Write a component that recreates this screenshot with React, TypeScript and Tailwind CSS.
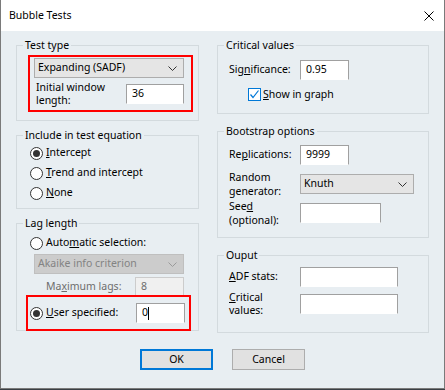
import type { ReactNode } from 'react'

const Chevron = ({ color = '#000' }: { color?: string }) => (
  <svg width="9" height="5" viewBox="0 0 9 5" className="shrink-0">
    <polyline points="0.5,0.5 4.5,4.5 8.5,0.5" fill="none" stroke={color} strokeWidth="1" />
  </svg>
)

const Radio = ({ checked }: { checked?: boolean }) => (
  <span className="w-[13px] h-[13px] rounded-full border border-[#333] bg-white flex items-center justify-center shrink-0">
    {checked && <span className="w-[7px] h-[7px] rounded-full bg-[#333]" />}
  </span>
)

const Field = ({
  value,
  width,
  disabled,
  caret
}: {
  value?: string
  width: string
  disabled?: boolean
  caret?: boolean
}) => (
  <div
    className={`${width} h-[20px] shrink-0 flex items-center pl-[5px] border ${
      disabled
        ? 'bg-[#f0f0f0] border-[#cccccc] text-[#6d6d6d]'
        : 'bg-white border-[#a0a0a0] border-b-white'
    }`}
  >
    {value}
    {caret && <span className="w-px h-[13px] bg-black" />}
  </div>
)

const Select = ({
  value,
  width,
  disabled
}: {
  value: string
  width: string
  disabled?: boolean
}) => (
  <div
    className={`${width} h-[20px] shrink-0 flex items-center justify-between pl-[3px] pr-[6px] border ${
      disabled
        ? 'bg-[#cccccc] border-[#bfbfbf] text-[#838383]'
        : 'bg-[#e5e5e5] border-[#adadad]'
    }`}
  >
    <span>{value}</span>
    <Chevron color={disabled ? '#9a9a9a' : '#333'} />
  </div>
)

const Group = ({
  title,
  height,
  children
}: {
  title: string
  height: string
  children: ReactNode
}) => (
  <fieldset className={`${height} border border-[#d3dade] flex flex-col`}>
    <legend className="ml-[6px] px-[2px] leading-[16px]">{title}</legend>
    {children}
  </fieldset>
)

const Button = ({ label, primary }: { label: string; primary?: boolean }) => (
  <div
    className={`w-[73px] h-[21px] flex items-center justify-center bg-[#e1e1e1] ${
      primary ? 'border-2 border-[#0078d7]' : 'border border-[#adadad]'
    }`}
  >
    {label}
  </div>
)

const App = () => {
  return (
    <div className="w-[445px] h-[390px] bg-[#3a3f44] font-['Noto_Sans',sans-serif] text-[10.5px] text-black">
      <div className="h-[389px] flex flex-col border-x border-b border-[#7a7a7a]">
        {/* Title bar */}
        <div className="h-[31px] shrink-0 bg-white flex items-center justify-between pl-[8px] pr-[10px]">
          <span>Bubble Tests</span>
          <svg width="10" height="10" viewBox="0 0 10 10">
            <path d="M0.5 0.5 L9.5 9.5 M9.5 0.5 L0.5 9.5" stroke="#000" strokeWidth="1" />
          </svg>
        </div>

        {/* Body */}
        <div className="flex-1 bg-[#e8eef2] px-[15px] pt-[6px] flex flex-col">
          <div className="flex gap-[18px]">
            {/* Left column */}
            <div className="w-[183px] flex flex-col gap-[6px]">
              <Group title="Test type" height="h-[84px]">
                <div className="ml-[11px] mt-[2px] w-[165px] h-[57px] border-2 border-[#ff0000] pl-[4px] pr-[7px] pt-[1px] flex flex-col">
                  <Select value="Expanding (SADF)" width="w-[150px]" />
                  <div className="mt-[6px] flex items-center h-[20px] w-[150px]">
                    <div className="ml-[2px] leading-[13px] flex-1">
                      Initial window
                      <br />
                      length:
                    </div>
                    <Field value="36" width="w-[58px]" />
                  </div>
                </div>
              </Group>

              <Group title="Include in test equation" height="h-[82px]">
                <div className="ml-[13px] flex flex-col">
                  <div className="h-[20px] flex items-center gap-[3px]">
                    <Radio checked />
                    <span><u>I</u>ntercept</span>
                  </div>
                  <div className="h-[20px] flex items-center gap-[3px]">
                    <Radio />
                    <span><u>T</u>rend and intercept</span>
                  </div>
                  <div className="h-[20px] flex items-center gap-[3px]">
                    <Radio />
                    <span><u>N</u>one</span>
                  </div>
                </div>
              </Group>

              <Group title="Lag length" height="h-[116px]">
                <div className="ml-[13px] mt-[2px] h-[20px] flex items-center gap-[3px]">
                  <Radio />
                  <span>Auto<u>m</u>atic selection:</span>
                </div>
                <div className="ml-[17px] mt-px">
                  <Select value="Akaike info criterion" width="w-[150px]" disabled />
                </div>
                <div className="ml-[29px] mt-[3px] w-[138px] h-[20px] flex items-center justify-between">
                  <span className="text-[#6d6d6d]">Ma<u>x</u>imum lags:</span>
                  <Field value="8" width="w-[49px]" disabled />
                </div>
                <div className="ml-[9px] -mt-[2px] w-[165px] h-[36px] border-2 border-[#ff0000] pl-[2px] pr-[4px] flex items-center justify-between">
                  <div className="flex items-center gap-[3px]">
                    <Radio checked />
                    <span><u>U</u>ser specified:</span>
                  </div>
                  <Field value="0" width="w-[49px]" caret />
                </div>
              </Group>
            </div>

            {/* Right column */}
            <div className="w-[212px] flex flex-col gap-[9px]">
              <Group title="Critical values" height="h-[77px]">
                <div className="ml-[11px] mt-[7px] h-[20px] flex items-center">
                  <span className="w-[71px]">Sig<u>n</u>ificance:</span>
                  <Field value="0.95" width="w-[49px]" />
                </div>
                <div className="ml-[30px] mt-[8px] h-[13px] flex items-center gap-[2px]">
                  <span className="w-[13px] h-[13px] border border-[#0078d7] bg-white flex items-center justify-center">
                    <svg width="11" height="11" viewBox="0 0 11 11">
                      <polyline points="1.5,5.5 4,8.5 9.5,1.5" fill="none" stroke="#0078d7" strokeWidth="1.2" />
                    </svg>
                  </span>
                  <span><u>S</u>how in graph</span>
                </div>
              </Group>

              <Group title="Bootstrap options" height="h-[115px]">
                <div className="ml-[11px] mt-[6px] h-[20px] flex items-center">
                  <span className="w-[71px]">Re<u>p</u>lications:</span>
                  <Field value="9999" width="w-[49px]" />
                </div>
                <div className="ml-[11px] mt-[9px] h-[20px] flex items-center">
                  <span className="w-[71px] leading-[14px]">
                    Random
                    <br />
                    generator:
                  </span>
                  <Select value="Knuth" width="w-[114px]" />
                </div>
                <div className="ml-[11px] mt-[9px] h-[20px] flex items-center">
                  <span className="w-[71px] leading-[14px]">
                    See<u>d</u>
                    <br />
                    (optional):
                  </span>
                  <Field width="w-[81px]" />
                </div>
              </Group>

              <Group title="Ouput" height="h-[86px]">
                <div className="ml-[11px] mt-[4px] h-[20px] flex items-center">
                  <span className="w-[71px]"><u>A</u>DF stats:</span>
                  <Field width="w-[98px]" />
                </div>
                <div className="ml-[11px] mt-[7px] h-[20px] flex items-center">
                  <span className="w-[71px] leading-[13px]">
                    <u>C</u>ritical
                    <br />
                    values:
                  </span>
                  <Field width="w-[98px]" />
                </div>
              </Group>
            </div>
          </div>

          {/* Buttons */}
          <div className="mt-[16px] flex justify-center gap-[19px]">
            <Button label="OK" primary />
            <Button label="Cancel" />
          </div>
        </div>
      </div>
    </div>
  )
}

export default App
